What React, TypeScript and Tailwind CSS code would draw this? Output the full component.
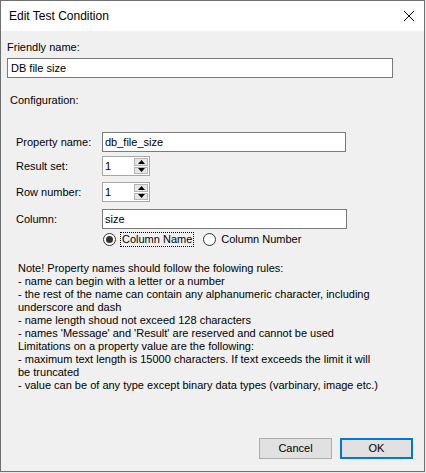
import React from "react";

const font = { fontFamily: '"Liberation Sans", Arial, sans-serif' };

function Spinner({ value }: { value: string }) {
  return (
    <div className="flex h-[20px] w-[48px] items-stretch border border-[#a6a6a6] bg-white">
      <div className="flex-1 pl-[2px] text-[11px] leading-[18px] text-black">{value}</div>
      <div className="my-[1px] mr-[1px] flex w-[14px] flex-col gap-[1px]">
        <div className="flex flex-1 items-center justify-center border border-[#b5b5b5] bg-[#e6e6e6]">
          <svg width="7" height="4" viewBox="0 0 7 4">
            <path d="M3.5 0 L7 4 L0 4 Z" fill="#000" />
          </svg>
        </div>
        <div className="flex flex-1 items-center justify-center border border-[#b5b5b5] bg-[#e6e6e6]">
          <svg width="7" height="4" viewBox="0 0 7 4">
            <path d="M0 0 L7 0 L3.5 4 Z" fill="#000" />
          </svg>
        </div>
      </div>
    </div>
  );
}

function Radio({ checked }: { checked: boolean }) {
  return (
    <div className="flex h-[13px] w-[13px] items-center justify-center rounded-full border border-[#333333] bg-white">
      {checked && <div className="h-[7px] w-[7px] rounded-full bg-[#333333]" />}
    </div>
  );
}

const noteLines = [
  "Note! Property names should follow the folowing rules:",
  "- name can begin with a letter or a number",
  "- the rest of the name can contain any alphanumeric character, including",
  "underscore and dash",
  "- name length shoud not exceed 128 characters",
  "- names 'Message' and 'Result' are reserved and cannot be used",
  "Limitations on a property value are the following:",
  "- maximum text length is 15000 characters. If text exceeds the limit it will",
  "be truncated",
  "- value can be of any type except binary data types (varbinary, image etc.)",
];

export default function App() {
  return (
    <div className="h-[473px] w-[426px] bg-[#e9e9e9]" style={font}>
      <div className="flex h-[472px] w-[425px] flex-col border border-[#6f6f6f] bg-[#f0f0f0] text-[11px] text-black">
        {/* Title bar */}
        <div className="flex h-[30px] items-center justify-between bg-white pl-[8px] pr-[8px]">
          <span className="text-[12px] text-black">Edit Test Condition</span>
          <svg width="12" height="12" viewBox="0 0 12 12" className="mr-[1px]">
            <path d="M1 1 L11 11 M11 1 L1 11" stroke="#000" strokeWidth="1" />
          </svg>
        </div>

        {/* Body */}
        <div className="flex flex-1 flex-col">
          <div className="ml-[6px] mt-[10px] h-[13px] leading-[13px]">Friendly name:</div>
          <div className="ml-[6px] mt-[4px] h-[20px] w-[386px] border border-[#7a7a7a] bg-white pl-[3px] leading-[18px]">
            DB file size
          </div>
          <div className="ml-[9px] mt-[16px] h-[13px] leading-[13px]">Configuration:</div>

          <div className="ml-[15px] mt-[25px] flex h-[20px] items-center">
            <div className="w-[86px]">Property name:</div>
            <div className="h-[20px] w-[244px] border border-[#7a7a7a] bg-white pl-[2px] leading-[18px]">
              db_file_size
            </div>
          </div>
          <div className="ml-[15px] mt-[4px] flex h-[20px] items-center">
            <div className="w-[86px]">Result set:</div>
            <Spinner value="1" />
          </div>
          <div className="ml-[15px] mt-[6px] flex h-[20px] items-center">
            <div className="w-[86px]">Row number:</div>
            <Spinner value="1" />
          </div>
          <div className="ml-[15px] mt-[7px] flex h-[20px] items-center">
            <div className="w-[86px]">Column:</div>
            <div className="h-[20px] w-[245px] border border-[#7a7a7a] bg-white pl-[2px] leading-[18px]">
              size
            </div>
          </div>
          <div className="ml-[102px] mt-[3px] flex h-[15px] items-center">
            <Radio checked />
            <div className="ml-[4px] h-[15px] border border-dotted border-black px-[1px] leading-[13px]">
              Column Name
            </div>
            <div className="ml-[9px]">
              <Radio checked={false} />
            </div>
            <div className="ml-[5px] leading-[13px]">Column Number</div>
          </div>

          <div className="ml-[17px] mt-[15px] flex flex-col">
            {noteLines.map((l, i) => (
              <div key={i} className="h-[13px] whitespace-nowrap leading-[13px]">
                {l}
              </div>
            ))}
          </div>

          <div className="mt-auto flex justify-end gap-[8px] pb-[12px] pr-[11px]">
            <button className="h-[21px] w-[73px] border border-[#adadad] bg-[#e1e1e1] text-[11px] text-black">
              Cancel
            </button>
            <button className="h-[21px] w-[73px] border-2 border-[#0078d7] bg-[#e1e1e1] text-[11px] text-black">
              OK
            </button>
          </div>
        </div>
      </div>
    </div>
  );
}
